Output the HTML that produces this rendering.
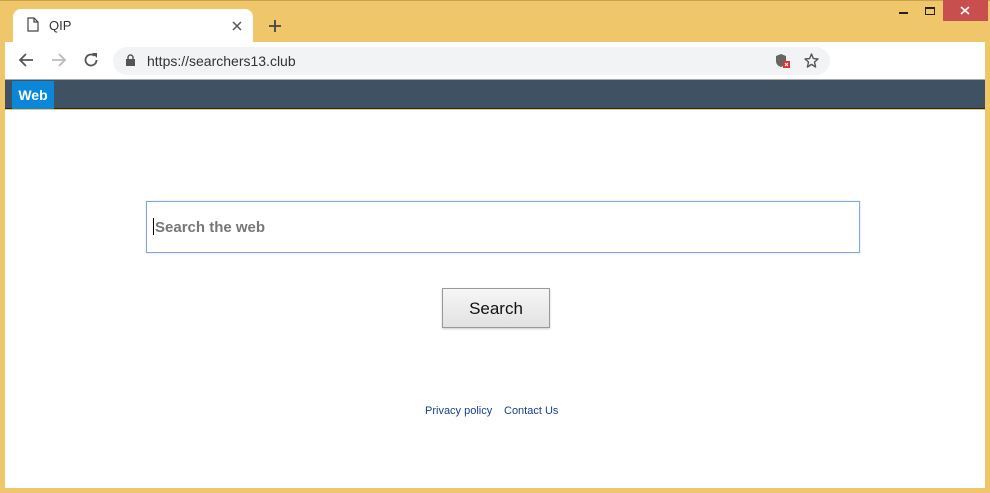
<!DOCTYPE html>
<html><head><style>
*{margin:0;padding:0;box-sizing:border-box}
body{width:990px;height:493px;background:#f0c66b;position:relative;overflow:hidden;font-family:"Liberation Sans",Arial,sans-serif}
.abs{position:absolute}
</style></head><body>
<div class="abs" style="left:0;top:0;width:990px;height:1px;background:#c9a24c"></div>
<div class="abs" style="left:13px;top:9px;width:240px;height:34px;background:#fff;border-radius:8px 8px 0 0"></div>
<svg class="abs" style="left:27px;top:17px" width="12" height="15" viewBox="0 0 12 15"><path d="M1 1h6l4 4v9H1z M7 1v4h4" fill="none" stroke="#444" stroke-width="1.2"/></svg>
<div class="abs" style="left:49px;top:18px;font-size:13px;color:#333">QIP</div>
<svg class="abs" style="left:232px;top:21px" width="10" height="10"><path d="M1 1L9 9M9 1L1 9" stroke="#555" stroke-width="1.5"/></svg>
<svg class="abs" style="left:268px;top:19px" width="14" height="14"><path d="M7 1V13M1 7H13" stroke="#444" stroke-width="1.8"/></svg>
<div class="abs" style="left:899px;top:12px;width:9px;height:2px;background:#222"></div>
<div class="abs" style="left:925px;top:7px;width:10px;height:8px;border:1px solid #222;border-top-width:2px"></div>
<div class="abs" style="left:943px;top:0;width:45px;height:21px;background:#c94f4f"></div>
<svg class="abs" style="left:960px;top:6px" width="10" height="9"><path d="M1 1L9 8M9 1L1 8" stroke="#fff" stroke-width="1.6"/></svg>
<div class="abs" style="left:5px;top:42px;width:980px;height:37px;background:#fff"></div>
<svg class="abs" style="left:18px;top:52px" width="16" height="16"><path d="M15 8H2M8 2L2 8L8 14" fill="none" stroke="#555" stroke-width="1.8"/></svg>
<svg class="abs" style="left:51px;top:52px" width="16" height="16"><path d="M1 8H14M8 2L14 8L8 14" fill="none" stroke="#bbb" stroke-width="1.8"/></svg>
<svg class="abs" style="left:83px;top:52px" width="16" height="16"><path d="M13.5 8A5.5 5.5 0 1 1 11.5 3.8" fill="none" stroke="#555" stroke-width="1.8"/><path d="M9 1H14V6z" fill="#555"/></svg>
<div class="abs" style="left:113px;top:47px;width:717px;height:28px;background:#f1f3f4;border-radius:14px"></div>
<svg class="abs" style="left:126px;top:54px" width="9" height="12"><rect x="0" y="5" width="9" height="7" fill="#555"/><path d="M2 5V3.5a2.5 2.5 0 0 1 5 0V5" fill="none" stroke="#555" stroke-width="1.5"/></svg>
<div class="abs" style="left:147px;top:53px;font-size:14px;color:#333">https://searchers13.club</div>
<svg class="abs" style="left:775px;top:53px" width="16" height="16"><path d="M6 1L11 3V8C11 11 9 13 6 14C3 13 1 11 1 8V3z" fill="#666"/><rect x="8" y="8" width="7" height="7" fill="#e03030"/><path d="M10 10l3 3M13 10l-3 3" stroke="#fff" stroke-width="1"/></svg>
<svg class="abs" style="left:804px;top:53px" width="15" height="15" viewBox="0 0 15 15"><path d="M7.5 1L9.4 5.6L14 6L10.5 9L11.6 14L7.5 11.4L3.4 14L4.5 9L1 6L5.6 5.6z" fill="none" stroke="#555" stroke-width="1.4" stroke-linejoin="round"/></svg>
<div class="abs" style="left:5px;top:79px;width:980px;height:1px;background:#aaa"></div>
<div class="abs" style="left:5px;top:80px;width:980px;height:29px;background:#3f5263;border-bottom:1px solid #1f2a33"></div>
<div class="abs" style="left:12px;top:81px;width:42px;height:28px;background:#0a87d9;color:#fff;font-weight:bold;font-size:14px;line-height:28px;text-align:center">Web</div>
<div class="abs" style="left:5px;top:110px;width:980px;height:378px;background:#fff"></div>
<div class="abs" style="left:146px;top:201px;width:714px;height:52px;border:1px solid #7ea6e8;box-shadow:0 0 1px #a8c4f0"></div>
<div class="abs" style="left:153px;top:218px;width:1px;height:17px;background:#000"></div>
<div class="abs" style="left:155px;top:219px;font-size:15px;font-weight:bold;color:#777">Search the web</div>
<div class="abs" style="left:442px;top:288px;width:108px;height:40px;border:1px solid #999;background:linear-gradient(#f6f6f6,#e2e2e2);box-shadow:0 1px 2px rgba(0,0,0,.2);font-size:17px;color:#111;text-align:center;line-height:40px">Search</div>
<div class="abs" style="left:425px;top:405px;font-size:11px;color:#1a3d8f">Privacy policy</div>
<div class="abs" style="left:504px;top:405px;font-size:11px;color:#1a3d8f">Contact Us</div>
</body></html>
